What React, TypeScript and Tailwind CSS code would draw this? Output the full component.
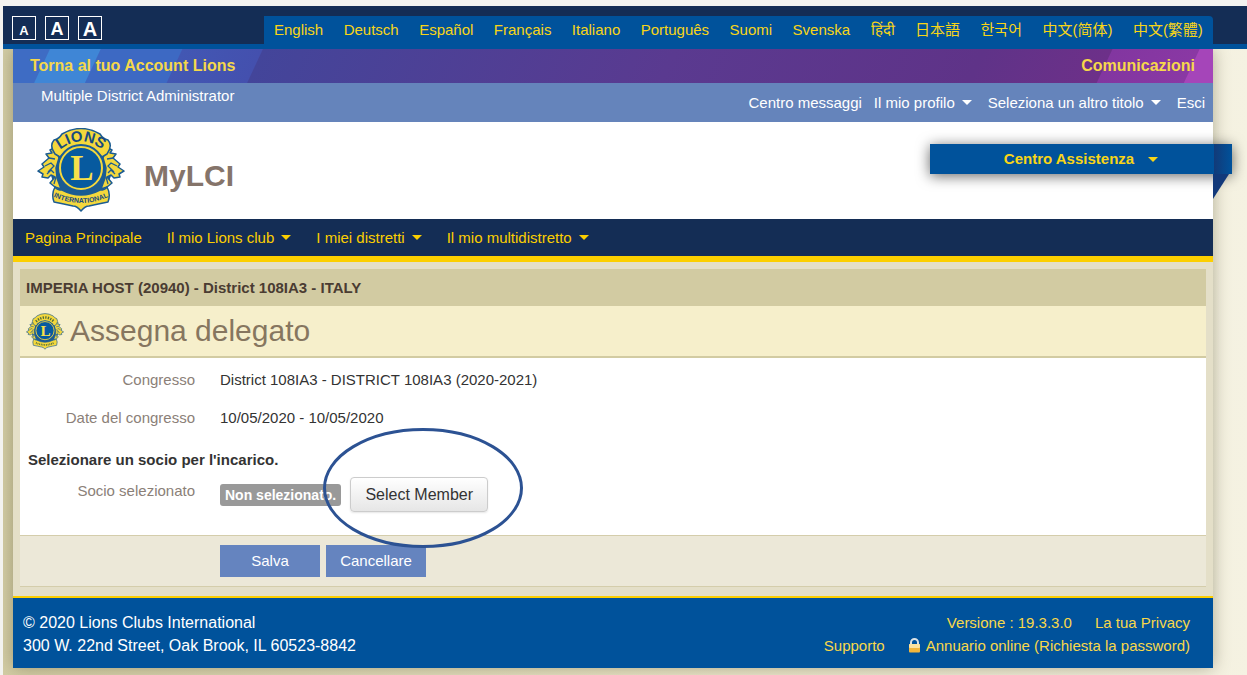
import React from "react";

const languages = [
  "English", "Deutsch", "Español", "Français", "Italiano", "Português", "Suomi",
  "Svenska", "हिंदी", "日本語", "한국어", "中文(简体)", "中文(繁體)",
];

function Caret() {
  return (
    <svg width="10" height="5" viewBox="0 0 10 5" className="fill-current" aria-hidden="true">
      <path d="M0 0h10L5 5z" />
    </svg>
  );
}

function EmblemShape() {
  return (
    <>
      <circle cx="44" cy="40" r="31" fill="#1c5c92" />
      <g fill="#f4d83c" stroke="#1c5c92" strokeWidth="1.500" strokeLinejoin="round">
        <path d="M19 19 L13 22 L15 25 L9 26 L12 30 L5 36 L7 39 L1 43 L6 46 L5 49 L11 50 L14 47 L18 49 L13 55 L18 59 L24 61 L20 50 L19 40 L22 30 Z" />
        <path d="M69 19 L75 22 L73 25 L79 26 L76 30 L83 36 L81 39 L87 43 L82 46 L83 49 L77 50 L74 47 L70 49 L75 55 L70 59 L64 61 L68 50 L69 40 L66 30 Z" />
        <path d="M17 12 Q22 11 25 6 Q44 -5 63 6 Q66 11 71 12 Q76 18 70 26 L65 29 Q44 7 23 29 L18 26 Q12 18 17 12 Z" />
        <path d="M18 59 Q20 62 25 62 Q44 72 63 62 Q68 62 70 59 Q74 66 71 74 Q61 76 52 78 Q48 78 44 83 Q40 78 36 78 Q27 76 17 74 Q14 66 18 59 Z" />
      </g>
      <g fill="none" stroke="#1c5c92" strokeWidth="1.300">
        <path d="M8 38l6-3 3 3-6 6M12 30l6 1M10 46l4-4 3 3M17 56l2-7" />
        <path d="M80 38l-6-3-3 3 6 6M76 30l-6 1M78 46l-4-4-3 3M71 56l-2-7" />
      </g>
      <circle cx="44" cy="40" r="24" fill="#1a5c96" />
      <circle cx="44" cy="40" r="21" fill="#075a9f" stroke="#f4d83c" strokeWidth="2" />
      <text x="45" y="52" textAnchor="middle" fontSize="35" fontWeight="700" fill="#f8e04a" fontFamily="Liberation Serif, serif">L</text>
    </>
  );
}

function Emblem() {
  return (
    <svg viewBox="0 0 88 84" className="h-[84px] w-[88px]" role="img" aria-label="Lions International">
      <defs>
        <path id="arc-top" d="M19 25 Q44 2 69 25" />
        <path id="arc-bottom" d="M17 69 Q44 81 71 69" />
      </defs>
      <EmblemShape />
      <text fontSize="15" fontWeight="700" fill="#164a80" fontFamily="Liberation Sans, sans-serif">
        <textPath href="#arc-top" startOffset="50%" textAnchor="middle">LIONS</textPath>
      </text>
      <text fontSize="7" fontWeight="700" fill="#164a80" fontFamily="Liberation Sans, sans-serif">
        <textPath href="#arc-bottom" startOffset="50%" textAnchor="middle">INTERNATIONAL</textPath>
      </text>
    </svg>
  );
}

function SmallEmblem() {
  return (
    <svg viewBox="0 0 88 84" className="h-[37px] w-[38px]" aria-hidden="true">
      <EmblemShape />
      <g fill="none" stroke="#4d6a3c" strokeWidth="6">
        <path d="M23 19 Q44 0 65 19" strokeDasharray="3 3" />
        <path d="M23 68 Q44 78 65 68" strokeWidth="4" strokeDasharray="2 2" />
      </g>
    </svg>
  );
}

function Lock() {
  return (
    <svg width="13" height="15" viewBox="0 0 13 15" aria-hidden="true">
      <path d="M3 8V4.500a3.500 3.500 0 0 1 7 0V8" fill="none" stroke="#d9e1e6" strokeWidth="2" />
      <rect x="1" y="6" width="11" height="8.500" rx="1" fill="#f2b63c" />
      <rect x="1" y="6" width="11" height="4" rx="1" fill="#fbe3a0" />
    </svg>
  );
}

function Field({ label, children }: { label: string; children: React.ReactNode }) {
  return (
    <div className="flex">
      <dt className="w-[175px] shrink-0 text-right text-[#8b8078]">{label}</dt>
      <dd className="ml-[25px] text-[#333]">{children}</dd>
    </div>
  );
}

export default function App() {
  return (
    <div className="bg-[#f3f3f0] pt-[6px] pl-[3px] font-['Liberation_Sans','Noto_Sans_CJK_SC','Noto_Sans_CJK_KR',sans-serif] text-[15px] leading-5">
      <header className="flex justify-between border-b-[5px] border-[#00529b] bg-[#142d55] pr-[34px] pl-[9px]">
        <div className="flex gap-[9px] pt-[10px]">
          <button aria-label="Testo piccolo" className="flex h-6 w-6 items-end justify-center border border-white text-[13px] leading-4 font-bold text-white">A</button>
          <button aria-label="Testo medio" className="flex h-6 w-6 items-end justify-center border border-white text-lg leading-5 font-bold text-white">A</button>
          <button aria-label="Testo grande" className="flex h-6 w-6 items-end justify-center border border-white text-xl leading-5 font-bold text-white">A</button>
        </div>
        <nav aria-label="Lingue" className="mt-[10px] flex h-7 w-[949px] items-center justify-between rounded-tr bg-[#00529b] px-[10px] text-[#f8d517]">
          {languages.map((l) => (
            <a key={l} href="#" className="whitespace-nowrap">{l}</a>
          ))}
        </nav>
      </header>

      <div className="overflow-hidden bg-linear-to-r from-[#d3cda5] via-[#e9e4c6] to-[#f5f2e2] pr-[34px] pb-2 pl-[10px]">
        <div className="bg-[#e4dfc8] shadow-[0_0_16px_rgba(90,85,50,0.450)]">
          <div className="flex h-[34px] items-center justify-between bg-[linear-gradient(115deg,#3e6cc4_0,#3e6cc4_33px,#3f86d6_34px,#3f86d6_79px,#3d69c3_80px,#3d69c3_153px,#4257b3_154px,#4450ae_226px,#43459a_227px,#5a3a90_600px,#5f3388_880px,#6d3089_996px,#8236a0_997px,#8a38a4_1075px,#a545b9_1076px)] pr-[18px] pl-[17px] text-base font-bold text-[#f5d84a]">
            <a href="#">Torna al tuo Account Lions</a>
            <a href="#">Comunicazioni</a>
          </div>
          <div className="flex h-[39px] justify-between bg-[#6584bb] pr-2 pl-7 text-white">
            <span className="pt-[3px]">Multiple District Administrator</span>
            <nav className="flex items-center">
              <a href="#" className="mr-3">Centro messaggi</a>
              <a href="#" className="mr-4 flex items-center gap-[7px]">Il mio profilo <Caret /></a>
              <a href="#" className="mr-4 flex items-center gap-[7px]">Seleziona un altro titolo <Caret /></a>
              <a href="#">Esci</a>
            </nav>
          </div>
          <div className="flex h-[97px] items-start justify-between bg-white pl-6">
            <div className="flex items-center pt-[6px]">
              <Emblem />
              <span className="ml-[19px] pt-3 text-[30px] font-bold text-[#85746a]">MyLCI</span>
            </div>
            <button className="relative mt-[22px] -mr-[19px] flex h-[30px] w-[302px] items-center justify-center gap-[14px] bg-[linear-gradient(to_right,#00529b_94%,#123a78_94%,#00529b_100%)] font-bold text-[#f8d517] shadow-[0_2px_14px_rgba(0,0,0,0.600)]">
              Centro Assistenza <Caret />
              <svg className="absolute top-full right-[3px]" width="16" height="25" viewBox="0 0 16 25" aria-hidden="true">
                <path d="M0 0h16L0 25z" fill="#12397a" />
              </svg>
            </button>
          </div>
          <nav className="flex h-[43px] items-center gap-[25px] border-b-[6px] border-[#fccf00] bg-[#142d55] pl-3 text-[#fccf00]">
            <a href="#">Pagina Principale</a>
            <a href="#" className="flex items-center gap-[7px]">Il mio Lions club <Caret /></a>
            <a href="#" className="flex items-center gap-[7px]">I miei distretti <Caret /></a>
            <a href="#" className="flex items-center gap-[7px]">Il mio multidistretto <Caret /></a>
          </nav>

          <main className="px-[7px] pt-[7px] pb-[9px]">
            <div className="flex h-[37px] items-center bg-[#d2cba2] pl-[6px] font-bold text-[#4a3c32]">
              IMPERIA HOST (20940) - District 108IA3 - ITALY
            </div>
            <div className="flex h-[52px] items-center gap-[6px] border-b-2 border-[#d2cba2] bg-[#f6efcb] pl-[6px]">
              <SmallEmblem />
              <h1 className="text-[30px] text-[#86765f]">Assegna delegato</h1>
            </div>
            <div className="h-[177px] bg-white pt-3">
              <dl className="flex flex-col gap-[18px]">
                <Field label="Congresso">District 108IA3 - DISTRICT 108IA3 (2020-2021)</Field>
                <Field label="Date del congresso">10/05/2020 - 10/05/2020</Field>
              </dl>
              <h2 className="mt-[22px] pl-2 font-bold text-[#333]">Selezionare un socio per l'incarico.</h2>
              <div className="mt-[7px] flex">
                <span className="mt-1 w-[175px] text-right text-[#8b8078]">Socio selezionato</span>
                <span className="mt-[7px] ml-[25px] flex h-[22px] items-center rounded-[3px] bg-[#999] px-[5px] text-sm font-bold text-white">Non selezionato.</span>
                <div className="relative ml-[9px]">
                  <button className="h-[35px] w-[138px] rounded border border-[#ccc] bg-linear-to-b from-white to-[#e6e6e6] text-base text-[#333] shadow-[0_1px_2px_rgba(0,0,0,0.100)]">Select Member</button>
                  <svg className="pointer-events-none absolute -top-[49px] -left-[27px] z-10 h-[120px] w-[200px]" viewBox="0 0 200 120" aria-hidden="true">
                    <ellipse cx="100" cy="60" rx="98.500" ry="58.500" fill="none" stroke="#2c5293" strokeWidth="3" />
                  </svg>
                </div>
              </div>
            </div>
            <div className="flex h-[52px] items-center gap-[6px] border-y border-[#d4cdab] bg-[#ece8d8] pl-[200px] text-white">
              <button className="h-8 w-[100px] bg-[#6584bf]">Salva</button>
              <button className="h-8 w-[100px] bg-[#6584bf]">Cancellare</button>
            </div>
          </main>

          <footer className="flex justify-between border-t-2 border-[#fccf00] bg-[#00529b] pt-[13px] pr-[23px] pb-[11px] pl-[10px] leading-[23px] text-white">
            <address className="text-base leading-[23px] not-italic">
              © 2020 Lions Clubs International<br />
              300 W. 22nd Street, Oak Brook, IL 60523-8842
            </address>
            <div className="text-right text-[#f8d84a]">
              <div className="flex justify-end gap-[23px]"><span>Versione : 19.3.3.0</span><a href="#">La tua Privacy</a></div>
              <div className="flex justify-end gap-[23px]">
                <a href="#">Supporto</a>
                <a href="#" className="flex items-center gap-[5px]"><Lock />Annuario online (Richiesta la password)</a>
              </div>
            </div>
          </footer>
        </div>
      </div>
    </div>
  );
}
